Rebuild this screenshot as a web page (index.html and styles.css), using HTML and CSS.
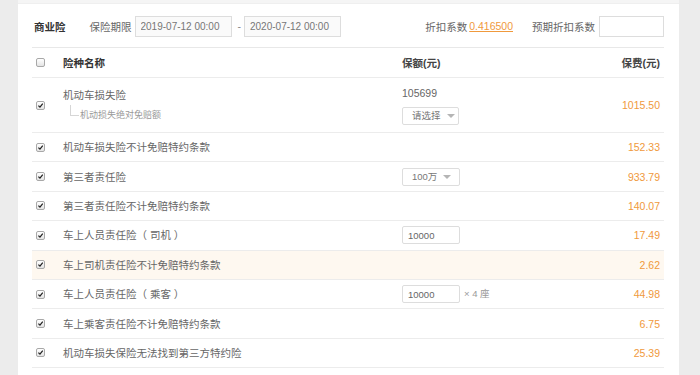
FILE: index.html
```html
<!DOCTYPE html>
<html lang="zh-CN">
<head>
    <meta charset="UTF-8">
    <title>商业险</title>
    <link rel="stylesheet" href="styles.css">
</head>
<body>
    <div class="panel">
        <div class="panel-top"></div>

        <!-- 保险期限 / 折扣 -->
        <div class="filter">
            <span class="filter-title">商业险</span>
            <span class="label label-period">保险期限</span>
            <input class="date-input" type="text" value="2019-07-12 00:00">
            <span class="dash">-</span>
            <input class="date-input" type="text" value="2020-07-12 00:00">
            <span class="label label-discount">折扣系数</span>
            <a class="discount-link" href="#">0.416500</a>
            <span class="label label-expect">预期折扣系数</span>
            <input class="expect-input" type="text" value="">
        </div>

        <div class="table">
            <div class="row row-head">
                <span class="cb-cell"><span class="cb"></span></span>
                <span class="name">险种名称</span>
                <span class="amount">保额(元)</span>
                <span class="price">保费(元)</span>
            </div>

            <div class="row row-tall">
                <span class="cb-cell"><span class="cb checked"><svg viewBox="0 0 9 9"><path d="M1.8 4.6 L3.8 6.6 L7.4 2"/></svg></span></span>
                <span class="name">
                    <span class="main-name">机动车损失险</span>
                    <span class="sub-name">机动损失绝对免赔额</span>
                </span>
                <span class="amount amount-stack">
                    <span class="amount-value">105699</span>
                    <span class="select select-wide">请选择<i class="caret"></i></span>
                </span>
                <span class="price">1015.50</span>
            </div>

            <div class="row">
                <span class="cb-cell"><span class="cb checked"><svg viewBox="0 0 9 9"><path d="M1.8 4.6 L3.8 6.6 L7.4 2"/></svg></span></span>
                <span class="name">机动车损失险不计免赔特约条款</span>
                <span class="amount"></span>
                <span class="price">152.33</span>
            </div>

            <div class="row">
                <span class="cb-cell"><span class="cb checked"><svg viewBox="0 0 9 9"><path d="M1.8 4.6 L3.8 6.6 L7.4 2"/></svg></span></span>
                <span class="name">第三者责任险</span>
                <span class="amount"><span class="select">100万<i class="caret"></i></span></span>
                <span class="price">933.79</span>
            </div>

            <div class="row">
                <span class="cb-cell"><span class="cb checked"><svg viewBox="0 0 9 9"><path d="M1.8 4.6 L3.8 6.6 L7.4 2"/></svg></span></span>
                <span class="name">第三者责任险不计免赔特约条款</span>
                <span class="amount"></span>
                <span class="price">140.07</span>
            </div>

            <div class="row">
                <span class="cb-cell"><span class="cb checked"><svg viewBox="0 0 9 9"><path d="M1.8 4.6 L3.8 6.6 L7.4 2"/></svg></span></span>
                <span class="name">车上人员责任险（ 司机 ）</span>
                <span class="amount"><input class="num-input" type="text" value="10000"></span>
                <span class="price">17.49</span>
            </div>

            <div class="row row-hover">
                <span class="cb-cell"><span class="cb checked"><svg viewBox="0 0 9 9"><path d="M1.8 4.6 L3.8 6.6 L7.4 2"/></svg></span></span>
                <span class="name">车上司机责任险不计免赔特约条款</span>
                <span class="amount"></span>
                <span class="price">2.62</span>
            </div>

            <div class="row">
                <span class="cb-cell"><span class="cb checked"><svg viewBox="0 0 9 9"><path d="M1.8 4.6 L3.8 6.6 L7.4 2"/></svg></span></span>
                <span class="name">车上人员责任险（ 乘客 ）</span>
                <span class="amount"><input class="num-input" type="text" value="10000"><span class="seats">× 4 座</span></span>
                <span class="price">44.98</span>
            </div>

            <div class="row">
                <span class="cb-cell"><span class="cb checked"><svg viewBox="0 0 9 9"><path d="M1.8 4.6 L3.8 6.6 L7.4 2"/></svg></span></span>
                <span class="name">车上乘客责任险不计免赔特约条款</span>
                <span class="amount"></span>
                <span class="price">6.75</span>
            </div>

            <div class="row">
                <span class="cb-cell"><span class="cb checked"><svg viewBox="0 0 9 9"><path d="M1.8 4.6 L3.8 6.6 L7.4 2"/></svg></span></span>
                <span class="name">机动车损失保险无法找到第三方特约险</span>
                <span class="amount"></span>
                <span class="price">25.39</span>
            </div>
        </div>
    </div>
</body>
</html>
```

FILE: styles.css
```css
* {
    margin: 0;
    padding: 0;
    box-sizing: border-box;
}

body {
    background-color: #ececec;
    font-family: "Liberation Sans", "Noto Sans CJK SC", sans-serif;
    font-size: 10.5px;
    color: #666666;
    height: 375px;
    overflow: hidden;
}

.panel {
    margin-left: 18px;
    width: 661px;
    height: 375px;
    background-color: #ffffff;
    padding: 0 15px 0 14px;
}

.panel-top {
    height: 4px;
    margin: 0 -15px 0 -14px;
    background-color: #f5f5f5;
    border-bottom: 1px solid #efefef;
}

/* filter bar */
.filter {
    display: flex;
    align-items: center;
    height: 44px;
    border-bottom: 1px solid #e8e8e8;
    padding-left: 2px;
    padding-top: 1px;
}

.filter-title {
    font-weight: bold;
    color: #333333;
}

.label {
    color: #666666;
}

.label-period {
    margin-left: 24px;
}

.date-input {
    width: 97px;
    height: 21px;
    margin-left: 3px;
    border: 1px solid #dddddd;
    background-color: #fafafa;
    font-family: inherit;
    font-size: 10px;
    color: #777777;
    padding-left: 5px;
    outline: none;
}

.dash {
    margin: 0 3px 0 6px;
    color: #888888;
}

.dash + .date-input {
    margin-left: 0;
}

.label-discount {
    margin-left: auto;
}

.discount-link {
    margin-left: 2px;
    color: #f0993c;
    text-decoration: underline;
}

.label-expect {
    margin-left: 19px;
}

.expect-input {
    width: 65px;
    height: 21px;
    margin-left: 4px;
    border: 1px solid #dddddd;
    background-color: #ffffff;
    outline: none;
}

/* table */
.row {
    display: grid;
    grid-template-columns: 31px 339px 1fr auto;
    align-items: center;
    height: 29.4px;
    border-bottom: 1px solid #ececec;
    line-height: 14px;
}

.row-head {
    height: 30px;
    color: #333333;
    font-weight: bold;
}

.row-head .amount,
.row-head .price {
    font-weight: bold;
    color: #444444;
}

.row-tall {
    height: 55px;
}

.row-hover {
    background-color: #fef8f0;
}

.cb-cell {
    padding-left: 4px;
    display: flex;
    align-items: center;
}

.cb {
    display: block;
    width: 9px;
    height: 9px;
    border: 1px solid #a8a8a8;
    border-radius: 2px;
    background: linear-gradient(#ffffff, #e4e4e4);
}

.cb svg {
    display: block;
    width: 7px;
    height: 7px;
}

.cb svg path {
    fill: none;
    stroke: #222222;
    stroke-width: 1.6;
}

.name {
    color: #666666;
}

.row-head .name {
    color: #333333;
}

.main-name {
    display: block;
}

.sub-name {
    display: block;
    position: relative;
    margin-top: 6px;
    padding-left: 17px;
    font-size: 9px;
    color: #999999;
}

/* tree connector */
.sub-name::before {
    content: "";
    position: absolute;
    left: 7px;
    top: -3px;
    width: 8px;
    height: 10px;
    border-left: 1px solid #d6d6d6;
    border-bottom: 1px solid #d6d6d6;
}

.amount {
    display: flex;
    align-items: center;
}

.amount-stack {
    flex-direction: column;
    align-items: flex-start;
}

.amount-value {
    color: #666666;
    margin-bottom: 7px;
}

.select {
    display: flex;
    align-items: center;
    width: 58px;
    height: 18px;
    border: 1px solid #dddddd;
    border-radius: 2px;
    padding-left: 9px;
    font-size: 9.5px;
    color: #777777;
}

.select-wide {
    width: 57px;
}

.caret {
    display: block;
    margin-left: 6px;
    border-left: 4px solid transparent;
    border-right: 4px solid transparent;
    border-top: 4px solid #b5b5b5;
}

.num-input {
    width: 58px;
    height: 18px;
    border: 1px solid #dddddd;
    border-radius: 2px;
    padding-left: 5px;
    font-family: inherit;
    font-size: 9.5px;
    color: #666666;
    outline: none;
}

.seats {
    margin-left: 4px;
    font-size: 9.5px;
    color: #999999;
}

.price {
    padding-right: 4px;
    color: #f0993c;
    text-align: right;
}
```
